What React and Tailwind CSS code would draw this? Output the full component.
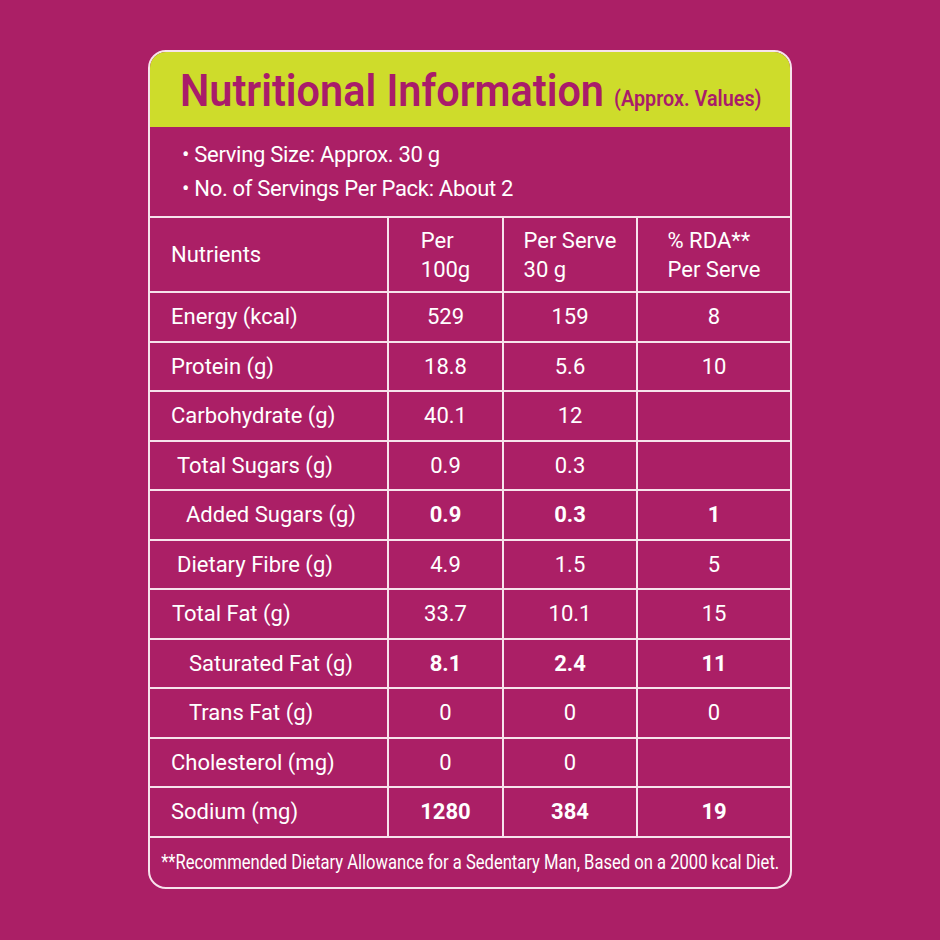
import React from "react";

const rows = [
  { name: "Energy (kcal)", indent: "pl-[21px]", a: "529", b: "159", c: "8" },
  { name: "Protein (g)", indent: "pl-[21px]", a: "18.8", b: "5.6", c: "10" },
  { name: "Carbohydrate (g)", indent: "pl-[21px]", a: "40.1", b: "12", c: "" },
  { name: "Total Sugars (g)", indent: "pl-[27px]", a: "0.9", b: "0.3", c: "" },
  { name: "Added Sugars (g)", indent: "pl-[36px]", a: "0.9", b: "0.3", c: "1", bold: true },
  { name: "Dietary Fibre (g)", indent: "pl-[27px]", a: "4.9", b: "1.5", c: "5" },
  { name: "Total Fat (g)", indent: "pl-[22px]", a: "33.7", b: "10.1", c: "15" },
  { name: "Saturated Fat (g)", indent: "pl-[39px]", a: "8.1", b: "2.4", c: "11", bold: true },
  { name: "Trans Fat (g)", indent: "pl-[39px]", a: "0", b: "0", c: "0" },
  { name: "Cholesterol (mg)", indent: "pl-[21px]", a: "0", b: "0", c: "" },
  { name: "Sodium (mg)", indent: "pl-[21px]", a: "1280", b: "384", c: "19", bold: true },
];

const font = { fontFamily: 'Roboto, "Liberation Sans", sans-serif' };

export default function App() {
  return (
    <div className="w-[940px] h-[940px] bg-[#ab1f66] flex justify-center pt-[50px]" style={font}>
      <div className="w-[644px] h-[839px] border-2 border-[#f7e3ec] rounded-[18px] overflow-hidden text-white flex flex-col">
        {/* Header */}
        <div className="h-[75px] bg-[#cedc2b] flex items-end pl-[30px] pb-[14px] shrink-0">
          <div className="flex items-end whitespace-nowrap scale-x-[0.92] origin-left">
            <span className="text-[#a91c6a] text-[45px] font-semibold leading-none">
              Nutritional Information
            </span>
            <span className="text-[#a91c6a] text-[21.5px] font-semibold leading-none ml-[11px] mb-[4px]">
              (Approx. Values)
            </span>
          </div>
        </div>
        {/* Serving */}
        <div className="h-[89px] flex flex-col justify-center pl-[32px] text-[22px] leading-[34px] tracking-[-0.3px] shrink-0">
          <p>• Serving Size: Approx. 30 g</p>
          <p>• No. of Servings Per Pack: About 2</p>
        </div>
        {/* Table header */}
        <div className="flex h-[75px] border-t-2 border-[#f7e3ec] text-[22px] leading-[29px] shrink-0">
          <div className="w-[237px] flex items-center pl-[21px]">Nutrients</div>
          <div className="w-[115px] border-l-2 border-[#f7e3ec] flex items-center justify-center">
            <div>
              <p>Per</p>
              <p>100g</p>
            </div>
          </div>
          <div className="w-[134px] border-l-2 border-[#f7e3ec] flex items-center justify-center">
            <div>
              <p>Per Serve</p>
              <p>30 g</p>
            </div>
          </div>
          <div className="flex-1 border-l-2 border-[#f7e3ec] flex items-center justify-center">
            <div>
              <p>% RDA**</p>
              <p>Per Serve</p>
            </div>
          </div>
        </div>
        {/* Rows */}
        {rows.map((r, i) => (
          <div key={i} className="flex h-[49.5px] border-t-2 border-[#f7e3ec] text-[22px] shrink-0">
            <div className={"w-[237px] flex items-center " + r.indent}>{r.name}</div>
            <div className={"w-[115px] border-l-2 border-[#f7e3ec] flex items-center justify-center " + (r.bold ? "font-bold" : "")}>
              {r.a}
            </div>
            <div className={"w-[134px] border-l-2 border-[#f7e3ec] flex items-center justify-center " + (r.bold ? "font-bold" : "")}>
              {r.b}
            </div>
            <div className={"flex-1 border-l-2 border-[#f7e3ec] flex items-center justify-center " + (r.bold ? "font-bold" : "")}>
              {r.c}
            </div>
          </div>
        ))}
        {/* Footnote */}
        <div className="flex-1 border-t-2 border-[#f7e3ec] flex items-center justify-center">
          <p className="text-[21px] whitespace-nowrap scale-x-[0.79]">
            **Recommended Dietary Allowance for a Sedentary Man, Based on a 2000 kcal Diet.
          </p>
        </div>
      </div>
    </div>
  );
}
